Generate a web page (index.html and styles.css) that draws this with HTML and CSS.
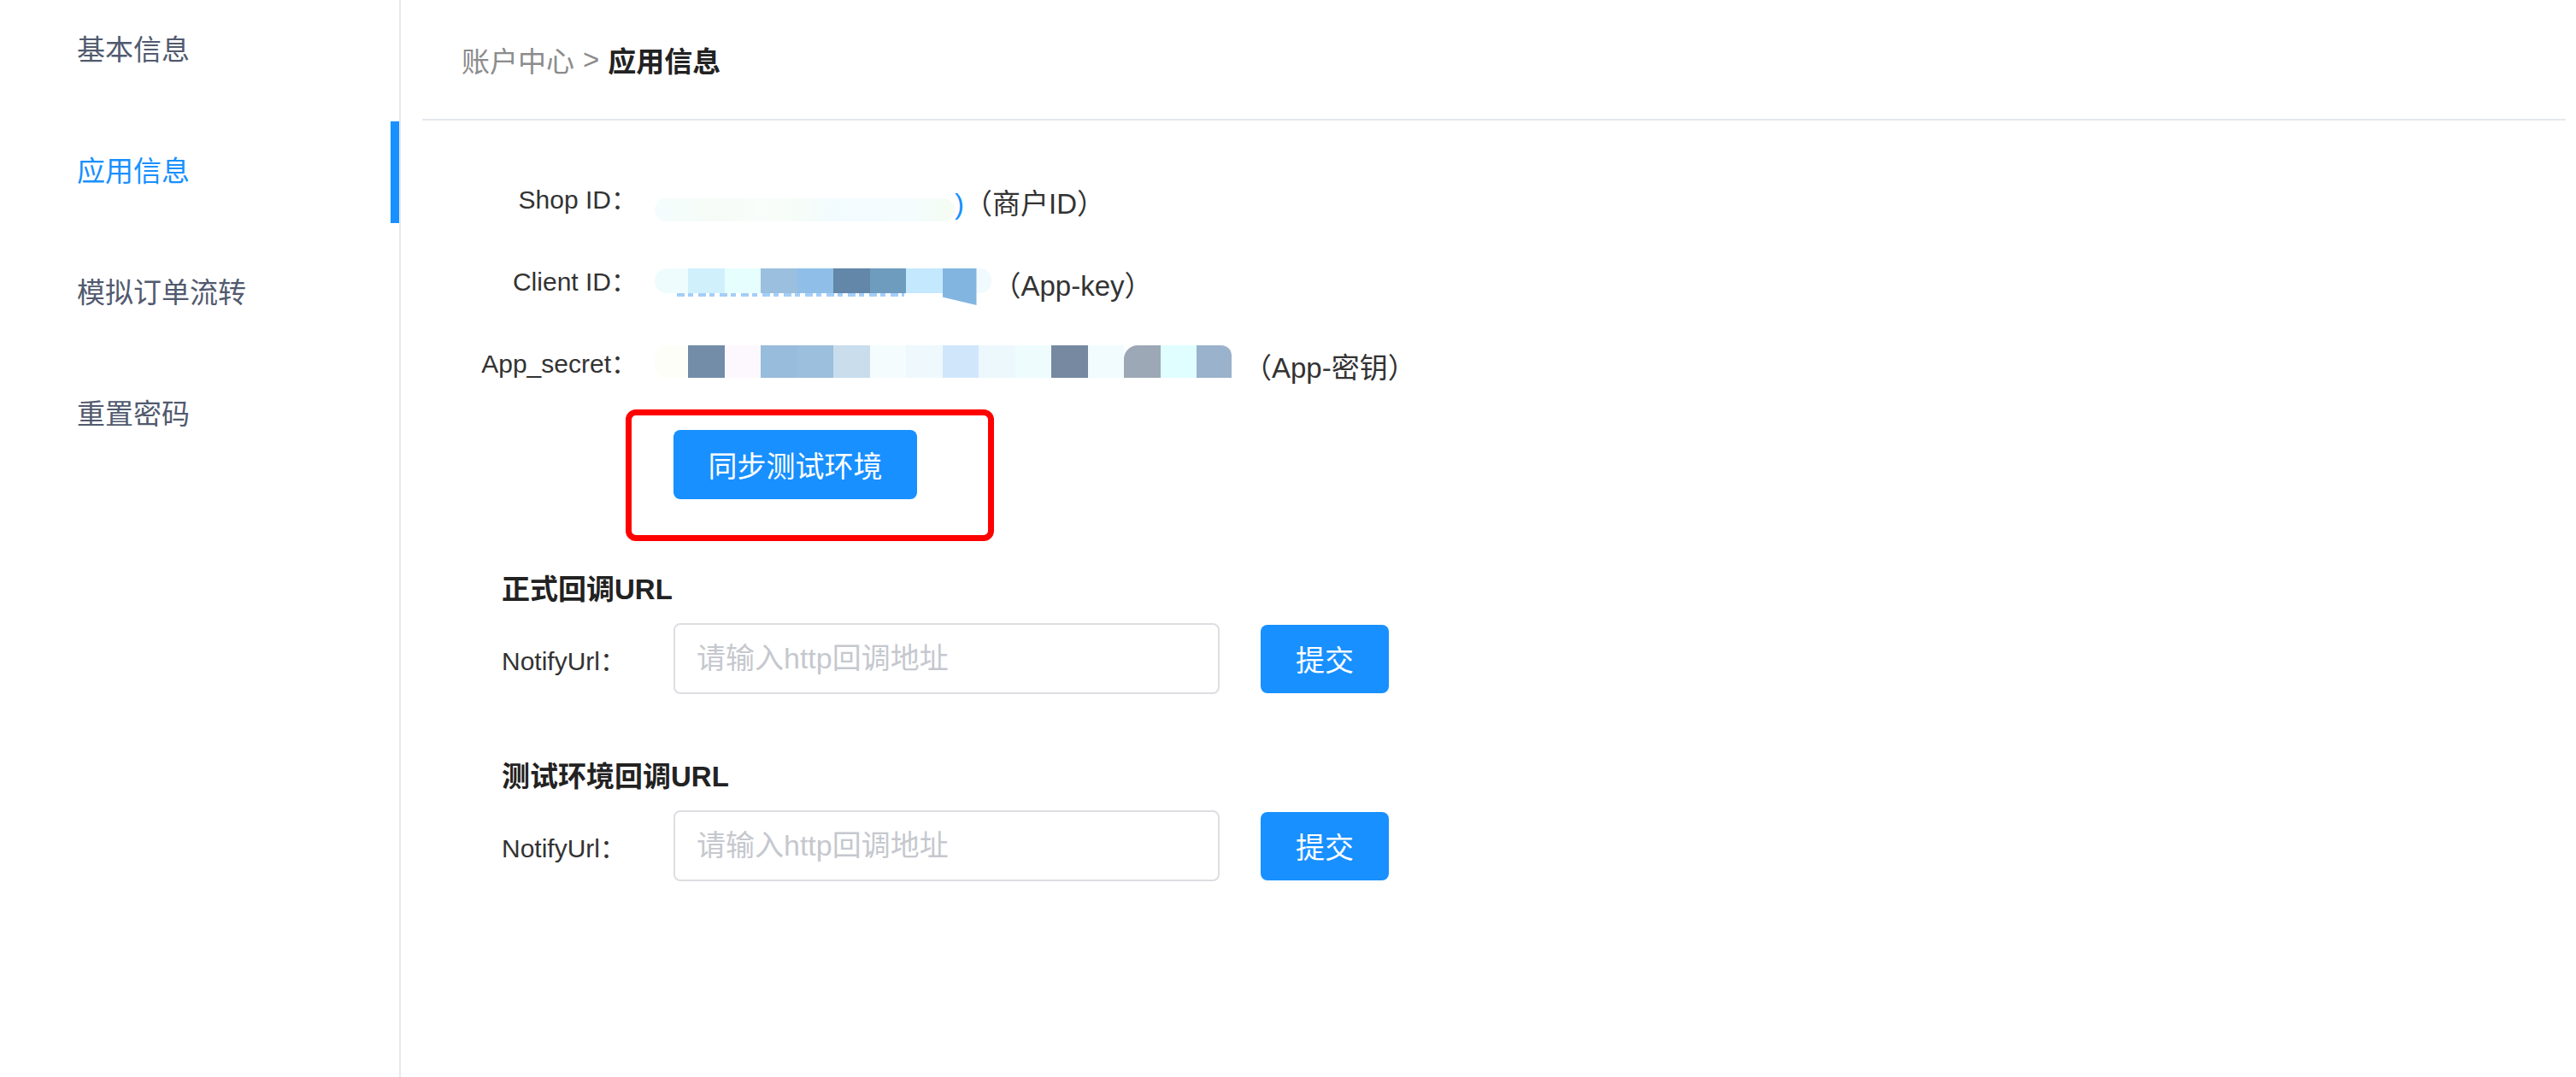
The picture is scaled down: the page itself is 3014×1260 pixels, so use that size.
FILE: index.html
```html
<!DOCTYPE html>
<html lang="zh-CN">
<head>
<meta charset="utf-8">
<title>应用信息</title>
<link rel="stylesheet" href="styles.css">
</head>
<body>
<div class="layout">
  <aside class="sidebar">
    <ul class="menu">
      <li class="menu-item">基本信息</li>
      <li class="menu-item active">应用信息</li>
      <li class="menu-item">模拟订单流转</li>
      <li class="menu-item">重置密码</li>
    </ul>
  </aside>
  <main class="main">
    <header class="crumbs">
      <span class="crumb-parent">账户中心</span><span class="crumb-sep">&gt;</span><span class="crumb-current">应用信息</span>
    </header>

    <section class="info">
      <div class="info-row">
        <div class="info-label">Shop ID：</div>
        <div class="info-value">
          <span class="mosaic mosaic-shop"></span><span class="link-tail">)</span><span class="note">（商户ID）</span>
        </div>
      </div>
      <div class="info-row">
        <div class="info-label">Client ID：</div>
        <div class="info-value">
          <span class="mosaic mosaic-client">
            <span class="tile tile-first" style="background:#effcfe"></span>
            <span class="tile" style="background:#d0f0fc"></span>
            <span class="tile" style="background:#e6fefe"></span>
            <span class="tile" style="background:#9bbfde"></span>
            <span class="tile" style="background:#8fbfe8"></span>
            <span class="tile" style="background:#6287a8"></span>
            <span class="tile" style="background:#6e9cbf"></span>
            <span class="tile" style="background:#c4e8fe"></span>
            <span class="tile tile-drop" style="background:#82b6e0"></span>
            <span class="tile tile-end" style="background:#f0faff"></span>
          </span><span class="note note-key">（App-key）</span>
        </div>
      </div>
      <div class="info-row">
        <div class="info-label">App_secret：</div>
        <div class="info-value">
          <span class="mosaic mosaic-secret">
            <span class="tile tile-first" style="background:#fefef9"></span>
            <span class="tile" style="background:#738ca8"></span>
            <span class="tile" style="background:#fdf8fd"></span>
            <span class="tile" style="background:#98bcdc"></span>
            <span class="tile" style="background:#9bbfdd"></span>
            <span class="tile" style="background:#c9dded"></span>
            <span class="tile" style="background:#f5fcfe"></span>
            <span class="tile" style="background:#eef8fd"></span>
            <span class="tile" style="background:#d0e7fb"></span>
            <span class="tile" style="background:#edf8fd"></span>
            <span class="tile" style="background:#eefcfe"></span>
            <span class="tile" style="background:#7689a0"></span>
            <span class="tile" style="background:#f2fcfe"></span>
            <span class="tile tile-bump" style="background:#9ca8b6"></span>
            <span class="tile" style="background:#e0feff"></span>
            <span class="tile tile-round" style="background:#9ab2cb"></span>
          </span><span class="note note-secret">（App-密钥）</span>
        </div>
      </div>
    </section>

    <div class="highlight">
      <button class="btn btn-sync" type="button">同步测试环境</button>
    </div>

    <section class="callback">
      <h3 class="callback-title">正式回调URL</h3>
      <div class="callback-row">
        <label class="callback-label">NotifyUrl：</label>
        <input class="callback-input" type="text" placeholder="请输入http回调地址">
        <button class="btn btn-submit" type="button">提交</button>
      </div>
    </section>

    <section class="callback callback-test">
      <h3 class="callback-title">测试环境回调URL</h3>
      <div class="callback-row">
        <label class="callback-label">NotifyUrl：</label>
        <input class="callback-input" type="text" placeholder="请输入http回调地址">
        <button class="btn btn-submit" type="button">提交</button>
      </div>
    </section>
  </main>
</div>
</body>
</html>
```

FILE: styles.css
```css
* {
  box-sizing: border-box;
  margin: 0;
  padding: 0;
}

html,
body {
  height: 100%;
}

body {
  background: #ffffff;
  font-family: "Liberation Sans", "Noto Sans CJK SC", sans-serif;
  color: #333333;
}

.layout {
  display: flex;
  min-height: 100vh;
}

/* ---------- sidebar ---------- */
.sidebar {
  width: 469px;
  flex: none;
  border-right: 2px solid #e4e8ef;
}

.menu {
  list-style: none;
  display: flex;
  flex-direction: column;
  gap: 23px;
}

.menu-item {
  position: relative;
  height: 119px;
  line-height: 117px;
  padding-left: 90px;
  font-size: 33px;
  color: #515a6e;
}

.menu-item.active {
  color: #1890ff;
}

.menu-item.active::after {
  content: "";
  position: absolute;
  top: 0;
  right: 0;
  width: 10px;
  height: 100%;
  background: #1890ff;
}

/* ---------- main ---------- */
.main {
  flex: 1;
  min-width: 0;
}

.crumbs {
  margin: 0 12px 0 25px;
  height: 141px;
  padding: 0 0 0 46px;
  border-bottom: 2px solid #e4e8ef;
  display: flex;
  align-items: center;
  font-size: 33px;
}

.crumb-parent {
  color: #8c8c8c;
}

.crumb-sep {
  color: #8c8c8c;
  margin: 0 10px;
}

.crumb-current {
  color: #222222;
  font-weight: 700;
}

/* ---------- info rows ---------- */
.info {
  padding-top: 73px;
  display: flex;
  flex-direction: column;
  gap: 56px;
}

.info-row {
  display: flex;
  align-items: flex-start;
  height: 40px;
}

.info-label {
  width: 276px;
  text-align: right;
  font-size: 30px;
  line-height: 40px;
  color: #333333;
}

.info-value {
  margin-left: 21px;
  display: flex;
  align-items: flex-start;
}

.mosaic {
  display: flex;
}

.mosaic-shop {
  width: 351px;
  height: 27px;
  margin-top: 18px;
  border-radius: 14px;
  background: linear-gradient(90deg, #f4fdfd 0%, #f6fbf6 20%, #f9fdfb 35%, #f7fdf7 45%, #f2fbfe 60%, #f4fcfe 85%, #f5fcf2 100%);
}

.mosaic-client {
  position: relative;
  height: 29px;
  margin-top: 4px;
}

/* bottoms of the blurred blue id peeking out under the mosaic */
.mosaic-client::after {
  content: "";
  position: absolute;
  left: 26px;
  top: 29px;
  width: 266px;
  height: 4px;
  background: repeating-linear-gradient(90deg, #5aa6f2 0 9px, transparent 9px 13px, #5aa6f2 13px 19px, transparent 19px 25px);
  opacity: 0.55;
}

.mosaic-secret {
  height: 38px;
  margin-top: -2px;
}

.tile {
  width: 42.5px;
  height: 100%;
  flex: none;
}

.tile-first {
  width: 39px;
  border-radius: 14px 0 0 14px;
}

.tile-drop {
  width: 40px;
  height: 43px;
  clip-path: polygon(0 0, 100% 0, 100% 100%, 0 78%);
}

.tile-end {
  width: 17px;
  border-radius: 0 14px 14px 0;
}

.tile-bump {
  border-radius: 16px 0 0 0;
}

.tile-round {
  width: 41px;
  border-radius: 0 12px 0 0;
}

.link-tail {
  font-size: 33px;
  line-height: 40px;
  margin-top: 5px;
  color: #1890ff;
}

.note {
  font-size: 33px;
  line-height: 40px;
  margin-top: 5px;
  color: #333333;
}

.note-key {
  margin-left: 2px;
}

.note-secret {
  margin-left: 14px;
}

/* ---------- highlight box ---------- */
.highlight {
  margin: 33px 0 0 263px;
  width: 431px;
  height: 154px;
  border: 7px solid #ff0000;
  border-radius: 12px;
  padding: 17px 0 0 49px;
}

.btn {
  border: none;
  border-radius: 8px;
  background: #1890ff;
  color: #ffffff;
  font-family: inherit;
  font-size: 34px;
  cursor: pointer;
}

.btn-sync {
  width: 285px;
  height: 81px;
}

/* ---------- callback sections ---------- */
.callback {
  margin: 37px 0 0 118px;
}

.callback-test {
  margin-top: 77px;
}

.callback-title {
  font-size: 33px;
  line-height: 40px;
  font-weight: 700;
  color: #222222;
}

.callback-row {
  display: flex;
  align-items: center;
  margin-top: 19px;
}

.callback-label {
  width: 201px;
  font-size: 30px;
  color: #333333;
}

.callback-input {
  width: 639px;
  height: 83px;
  border: 2px solid #dcdee2;
  border-radius: 8px;
  padding: 0 25px;
  font-family: inherit;
  font-size: 34px;
  color: #333333;
  outline: none;
}

.callback-input::placeholder {
  color: #c5c8ce;
}

.btn-submit {
  margin-left: 48px;
  width: 150px;
  height: 80px;
}
```
